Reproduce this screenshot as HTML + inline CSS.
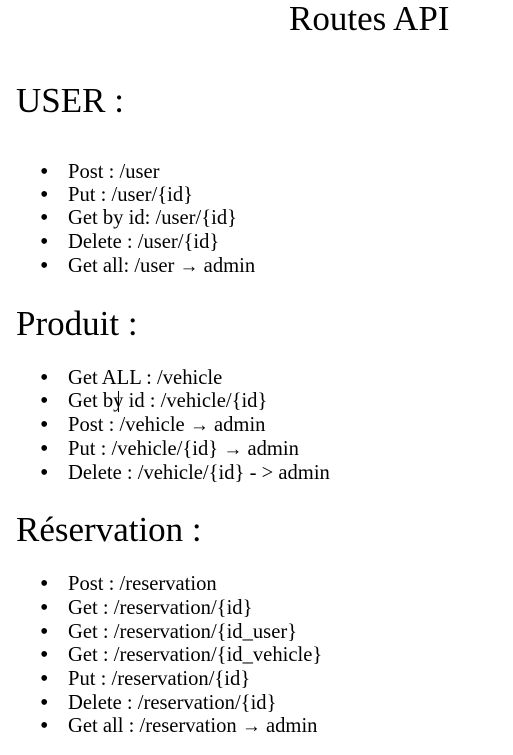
<!DOCTYPE html>
<html><head><meta charset="utf-8"><style>
body{margin:0;width:513px;height:755px;background:#fff;position:relative;overflow:hidden;font-family:"Liberation Serif",serif;color:#000}
.l{position:absolute;white-space:nowrap;line-height:1}
.i{font-size:20.6px;left:68px}
.b{font-size:24px;left:40px;margin-top:-2px}
.h{font-size:35px;left:16px}
.a{font-size:19px}
</style></head><body>
<div class="l" style="font-size:35px;left:289px;top:1px">Routes API</div>
<div class="l h" style="top:83px">USER :</div>
<div class="l h" style="top:306px">Produit :</div>
<div class="l h" style="top:512px">Réservation :</div>

<div class="l b" style="top:162px">•</div><div class="l i" style="top:162px">Post : /user</div>
<div class="l b" style="top:185px">•</div><div class="l i" style="top:185px">Put : /user/{id}</div>
<div class="l b" style="top:208px">•</div><div class="l i" style="top:208px">Get by id: /user/{id}</div>
<div class="l b" style="top:232px">•</div><div class="l i" style="top:232px">Delete : /user/{id}</div>
<div class="l b" style="top:256px">•</div><div class="l i" style="top:256px">Get all: /user <span class="a">→</span> admin</div>

<div class="l b" style="top:368px">•</div><div class="l i" style="top:368px">Get ALL : /vehicle</div>
<div class="l b" style="top:391px">•</div><div class="l i" style="top:391px">Get by id : /vehicle/{id}</div>
<div style="position:absolute;left:118px;top:391px;width:1px;height:21px;background:#000"></div>
<div class="l b" style="top:415px">•</div><div class="l i" style="top:415px">Post : /vehicle <span class="a">→</span> admin</div>
<div class="l b" style="top:439px">•</div><div class="l i" style="top:439px">Put : /vehicle/{id} <span class="a">→</span> admin</div>
<div class="l b" style="top:463px">•</div><div class="l i" style="top:463px">Delete : /vehicle/{id} - &gt; admin</div>

<div class="l b" style="top:574px">•</div><div class="l i" style="top:574px">Post : /reservation</div>
<div class="l b" style="top:598px">•</div><div class="l i" style="top:598px">Get : /reservation/{id}</div>
<div class="l b" style="top:622px">•</div><div class="l i" style="top:622px">Get : /reservation/{id_user}</div>
<div class="l b" style="top:645px">•</div><div class="l i" style="top:645px">Get : /reservation/{id_vehicle}</div>
<div class="l b" style="top:669px">•</div><div class="l i" style="top:669px">Put : /reservation/{id}</div>
<div class="l b" style="top:693px">•</div><div class="l i" style="top:693px">Delete : /reservation/{id}</div>
<div class="l b" style="top:716px">•</div><div class="l i" style="top:716px">Get all : /reservation <span class="a">→</span> admin</div>
</body></html>
